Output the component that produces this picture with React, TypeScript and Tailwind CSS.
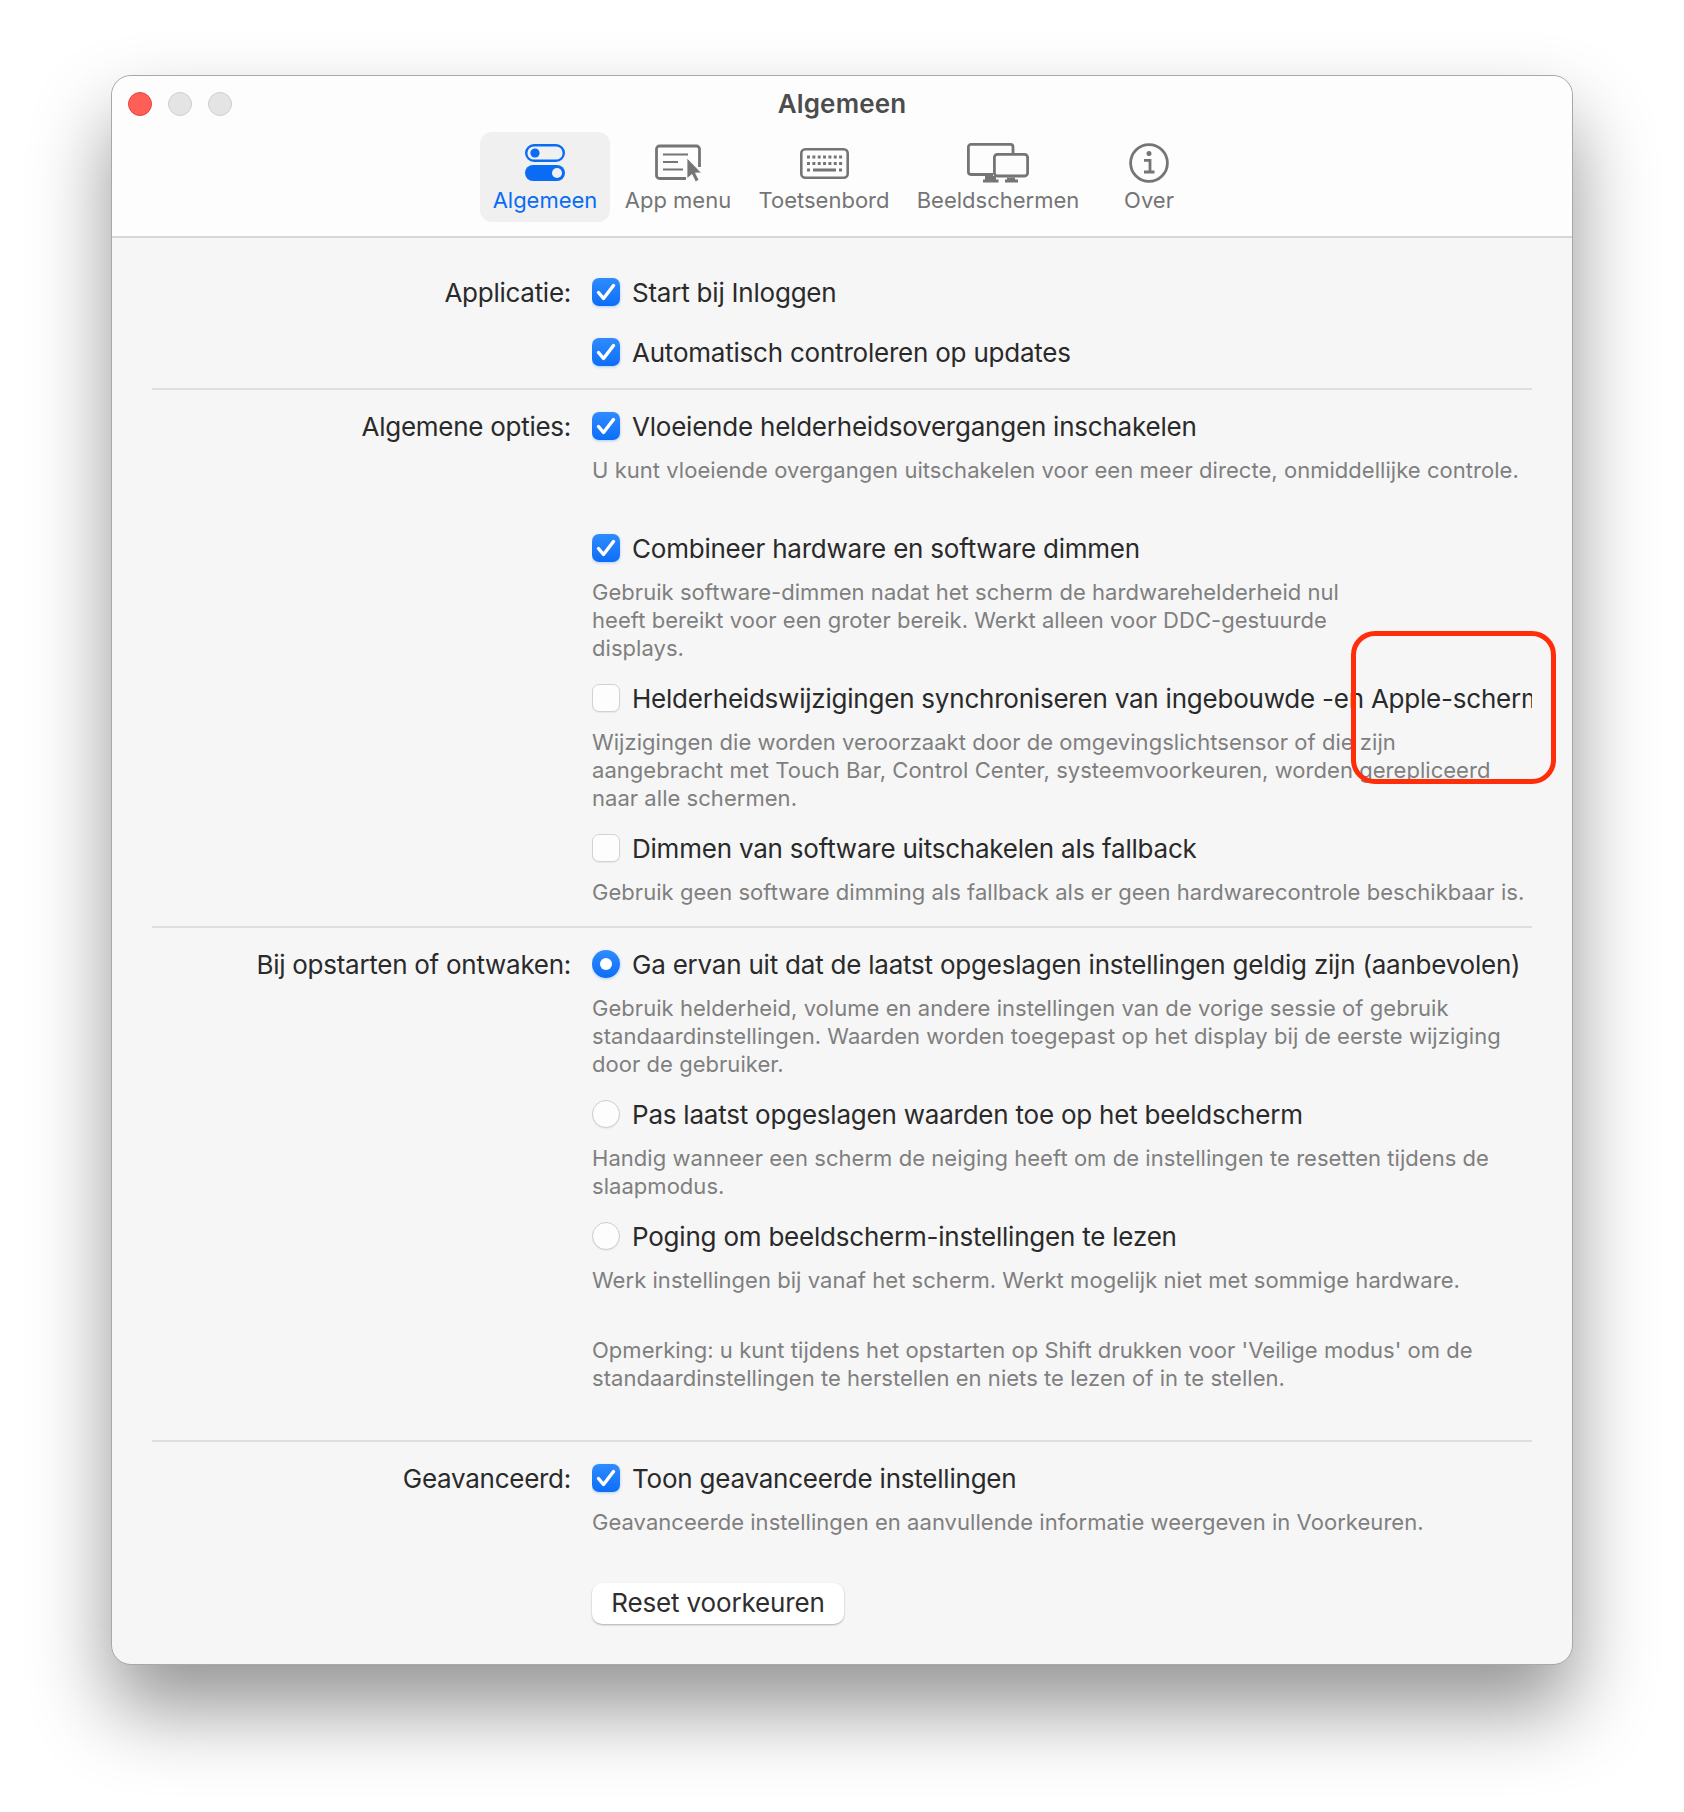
const font = "font-['Inter','Liberation_Sans',sans-serif]";

function TogglesIcon() {
  return (
    <svg width="40" height="38" viewBox="0 0 40 38" className="text-[#0a6cf5]">
      <rect x="1.2" y="1.2" width="37.6" height="15.6" rx="7.8" fill="none" stroke="currentColor" strokeWidth="2.4" />
      <circle cx="10" cy="9" r="4.6" fill="currentColor" />
      <rect x="0" y="21" width="40" height="16" rx="8" fill="currentColor" />
      <circle cx="32" cy="29" r="5" fill="#f0f0f0" />
    </svg>
  );
}

function MenuIcon() {
  return (
    <svg width="47" height="38" viewBox="0 0 47 38" fill="none" stroke="#757575" strokeWidth="2.8">
      <path d="M31 34.500H4.500A3 3 0 0 1 1.500 31.500V5A3 3 0 0 1 4.500 2H41.500A3 3 0 0 1 44.500 5V23" />
      <path d="M8 10.500H33M8 18H23M8 25.500H28" strokeWidth="2" />
      <path d="M32 14L46.500 29H40.500L44 36L40.500 37.800L37 30.500L32 34.500Z" fill="#757575" stroke="#fdfdfd" strokeWidth="0.800" />
    </svg>
  );
}

function KeyboardIcon() {
  const keys: number[][] = [];
  for (let row = 0; row < 3; row++) {
    const count = row === 2 ? 2 : 7;
    for (let i = 0; i < count; i++) {
      keys.push([row === 2 ? (i === 0 ? 7 : 39) : 7 + i * 5.35, 7.5 + row * 6.5]);
    }
  }
  return (
    <svg width="49" height="31" viewBox="0 0 49 31" fill="none">
      <rect x="1.300" y="1.300" width="46.400" height="28.400" rx="4" stroke="#757575" strokeWidth="2.600" />
      {keys.map(([x, y], i) => (
        <rect key={i} x={x} y={y} width="3" height="3" fill="#757575" />
      ))}
      <rect x="13" y="20.500" width="23" height="3" fill="#757575" />
    </svg>
  );
}

function DisplaysIcon() {
  return (
    <svg width="62" height="40" viewBox="0 0 62 40" fill="none" stroke="#757575" strokeWidth="2.800">
      <path d="M26 31.500H4A2.600 2.600 0 0 1 1.400 29V4A2.600 2.600 0 0 1 4 1.400H43.500A2.600 2.600 0 0 1 46 4V10" />
      <rect x="27.400" y="11.400" width="33.200" height="21.600" rx="3" />
      <path d="M18 33H29V36.500H31.500V39.500H16V36.500H18Z" fill="#757575" stroke="none" />
      <path d="M40 34.500H48V36.500H51V39.500H38V36.500H40Z" fill="#757575" stroke="none" />
    </svg>
  );
}

function InfoIcon() {
  return (
    <svg width="40" height="40" viewBox="0 0 40 40" fill="none" stroke="#757575">
      <circle cx="20" cy="20" r="18.400" strokeWidth="2.800" />
      <circle cx="20" cy="10.500" r="2.500" fill="#757575" stroke="none" />
      <path d="M15 17.300H21V29M15 29H25.500" strokeWidth="2.800" />
    </svg>
  );
}

function Tab({ label, icon, active, className }: { label: string; icon: React.ReactNode; active?: boolean; className: string }) {
  return (
    <div
      className={`flex h-[90px] flex-col items-center rounded-[12px] ${className} ${active ? "bg-[#f0f0f0] text-[#0a6cf5]" : "text-[#757575]"}`}
    >
      <div className="flex h-[54px] items-center justify-center pt-[8px]">{icon}</div>
      <span className="text-[22px] leading-[28px] whitespace-nowrap">{label}</span>
    </div>
  );
}

function Checkbox({ checked }: { checked?: boolean }) {
  if (checked) {
    return (
      <span className="flex h-[28px] w-[28px] shrink-0 items-center justify-center rounded-[7px] bg-linear-to-b from-[#2f8bff] to-[#0a6ef8] shadow-[0_1px_3px_rgba(10,110,248,0.3)]">
        <svg width="28" height="28" viewBox="0 0 28 28" fill="none">
          <path d="M6.500 14.500L11.500 20.500L21.500 7.500" stroke="#fff" strokeWidth="3.400" strokeLinecap="round" strokeLinejoin="round" />
        </svg>
      </span>
    );
  }
  return <span className="h-[28px] w-[28px] shrink-0 rounded-[7px] border border-[#d2d2d2] bg-[#fdfdfd] shadow-[0_1px_1px_rgba(0,0,0,0.06)]" />;
}

function Radio({ checked }: { checked?: boolean }) {
  if (checked) {
    return (
      <span className="flex h-[28px] w-[28px] shrink-0 items-center justify-center rounded-full bg-linear-to-b from-[#2f8bff] to-[#0a6ef8] shadow-[0_1px_3px_rgba(10,110,248,0.3)]">
        <span className="h-[12px] w-[12px] rounded-full bg-white" />
      </span>
    );
  }
  return <span className="h-[28px] w-[28px] shrink-0 rounded-full border border-[#cdcdcd] bg-[#fdfdfd] shadow-[0_1px_1px_rgba(0,0,0,0.06)]" />;
}

function Row({ label, control, text, className = "" }: { label?: string; control: React.ReactNode; text: string; className?: string }) {
  return (
    <div className={`flex h-[32px] items-center ${className}`}>
      <div className="w-[419px] shrink-0 text-right text-[26px] tracking-[-0.27px] text-[#2a2a2a]">{label}</div>
      <div className="ml-[21px] flex min-w-0 flex-1 items-center overflow-hidden">
        {control}
        <span className="ml-[12px] text-[26px] tracking-[-0.22px] whitespace-nowrap text-[#2a2a2a]">{text}</span>
      </div>
    </div>
  );
}

function Desc({ lines, className = "mt-[14px]" }: { lines: string[]; className?: string }) {
  return (
    <div className={`ml-[440px] text-[22px] leading-[28px] tracking-[0.04px] text-[#7f7f7f] ${className}`}>
      {lines.map((line) => (
        <div key={line} className="whitespace-nowrap">
          {line}
        </div>
      ))}
    </div>
  );
}

export default function App() {
  return (
    <div className={`relative h-[1812px] overflow-hidden bg-white pt-[75px] pl-[111px] ${font}`}>
      <div className="relative w-[1462px] rounded-[20px] border border-[#a8a8a8] bg-[#f6f6f6] shadow-[0_44px_80px_rgba(0,0,0,0.42)]">
        <div className="h-[162px] rounded-t-[20px] border-b-2 border-[#d6d6d6] bg-[#fdfdfd]">
          <div className="relative flex h-[56px] items-center justify-center pb-[2px]">
            <div className="absolute top-[16px] left-[16px] flex gap-[16px]">
              <span className="h-[24px] w-[24px] rounded-full border border-[#e2463f] bg-[#ff5f57]" />
              <span className="h-[24px] w-[24px] rounded-full border border-[#cfcfcf] bg-[#e4e4e4]" />
              <span className="h-[24px] w-[24px] rounded-full border border-[#cfcfcf] bg-[#e4e4e4]" />
            </div>
            <span className="text-[26px] font-semibold tracking-[0.15px] text-[#4c4c4c]">Algemeen</span>
          </div>
          <div className="flex pl-[368px]">
            <Tab label="Algemeen" icon={<TogglesIcon />} active className="w-[130px]" />
            <Tab label="App menu" icon={<MenuIcon />} className="ml-[8px] w-[120px]" />
            <Tab label="Toetsenbord" icon={<KeyboardIcon />} className="ml-[19px] w-[134px]" />
            <Tab label="Beeldschermen" icon={<DisplaysIcon />} className="ml-[20px] w-[174px]" />
            <Tab label="Over" icon={<InfoIcon />} className="ml-[34px] w-[60px]" />
          </div>
        </div>

        <div className="px-[40px] pt-[38px] pb-[40px]">
          <Row label="Applicatie:" control={<Checkbox checked />} text="Start bij Inloggen" />
          <Row control={<Checkbox checked />} text="Automatisch controleren op updates" className="mt-[28px]" />
          <div className="mt-[20px] h-[2px] bg-[#dedede]" />

          <Row label="Algemene opties:" control={<Checkbox checked />} text="Vloeiende helderheidsovergangen inschakelen" className="mt-[20px]" />
          <Desc lines={["U kunt vloeiende overgangen uitschakelen voor een meer directe, onmiddellijke controle."]} />
          <Row control={<Checkbox checked />} text="Combineer hardware en software dimmen" className="mt-[48px]" />
          <Desc
            lines={[
              "Gebruik software-dimmen nadat het scherm de hardwarehelderheid nul",
              "heeft bereikt voor een groter bereik. Werkt alleen voor DDC-gestuurde",
              "displays.",
            ]}
          />
          <Row control={<Checkbox />} text="Helderheidswijzigingen synchroniseren van ingebouwde -en Apple-schermen" className="mt-[20px]" />
          <Desc
            lines={[
              "Wijzigingen die worden veroorzaakt door de omgevingslichtsensor of die zijn",
              "aangebracht met Touch Bar, Control Center, systeemvoorkeuren, worden gerepliceerd",
              "naar alle schermen.",
            ]}
          />
          <Row control={<Checkbox />} text="Dimmen van software uitschakelen als fallback" className="mt-[20px]" />
          <Desc lines={["Gebruik geen software dimming als fallback als er geen hardwarecontrole beschikbaar is."]} />
          <div className="mt-[20px] h-[2px] bg-[#dedede]" />

          <Row
            label="Bij opstarten of ontwaken:"
            control={<Radio checked />}
            text="Ga ervan uit dat de laatst opgeslagen instellingen geldig zijn (aanbevolen)"
            className="mt-[20px]"
          />
          <Desc
            lines={[
              "Gebruik helderheid, volume en andere instellingen van de vorige sessie of gebruik",
              "standaardinstellingen. Waarden worden toegepast op het display bij de eerste wijziging",
              "door de gebruiker.",
            ]}
          />
          <Row control={<Radio />} text="Pas laatst opgeslagen waarden toe op het beeldscherm" className="mt-[20px]" />
          <Desc lines={["Handig wanneer een scherm de neiging heeft om de instellingen te resetten tijdens de", "slaapmodus."]} />
          <Row control={<Radio />} text="Poging om beeldscherm-instellingen te lezen" className="mt-[20px]" />
          <Desc lines={["Werk instellingen bij vanaf het scherm. Werkt mogelijk niet met sommige hardware."]} />
          <Desc
            lines={[
              "Opmerking: u kunt tijdens het opstarten op Shift drukken voor 'Veilige modus' om de",
              "standaardinstellingen te herstellen en niets te lezen of in te stellen.",
            ]}
            className="mt-[42px]"
          />
          <div className="mt-[48px] h-[2px] bg-[#dedede]" />

          <Row label="Geavanceerd:" control={<Checkbox checked />} text="Toon geavanceerde instellingen" className="mt-[20px]" />
          <Desc lines={["Geavanceerde instellingen en aanvullende informatie weergeven in Voorkeuren."]} />
          <button className="mt-[47px] ml-[440px] flex h-[41px] w-[252px] items-center justify-center rounded-[10px] bg-white pb-[2px] text-[26px] tracking-[-0.15px] text-[#2e2e2e] shadow-[0_1px_2px_rgba(0,0,0,0.3)]">
            Reset voorkeuren
          </button>
        </div>
      </div>

      {/* annotation over the screenshot */}
      <div className="absolute top-[631px] left-[1351px] h-[153px] w-[205px] rounded-[24px] border-[5px] border-[#ff2d0a]" />
    </div>
  );
}
